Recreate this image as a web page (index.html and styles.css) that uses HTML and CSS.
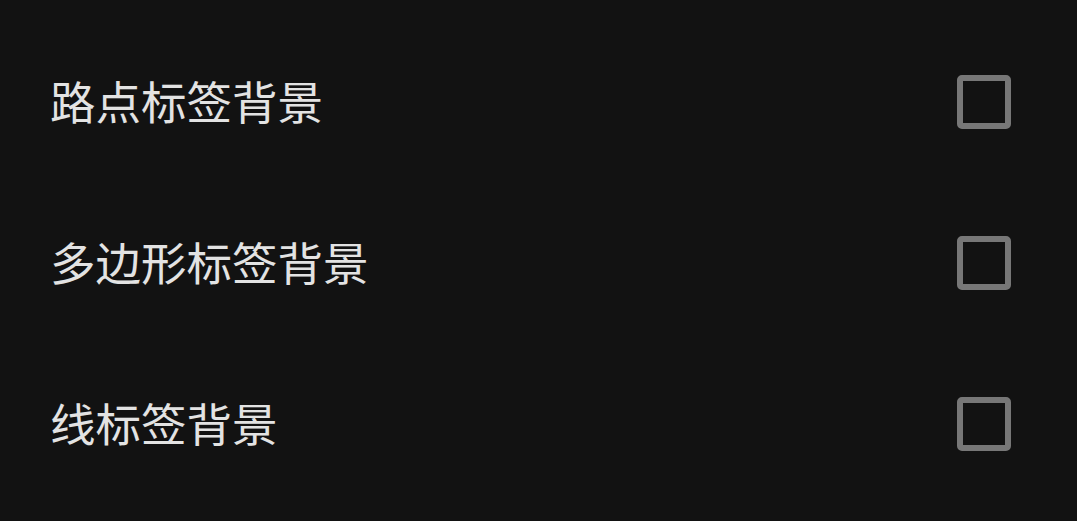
FILE: index.html
```html
<!DOCTYPE html>
<html lang="zh">
<head>
<meta charset="utf-8">
<link rel="stylesheet" href="styles.css">
</head>
<body>
<div class="list">
  <div class="row"><span class="label">路点标签背景</span><span class="box"></span></div>
  <div class="row"><span class="label">多边形标签背景</span><span class="box"></span></div>
  <div class="row"><span class="label">线标签背景</span><span class="box"></span></div>
</div>
</body>
</html>
```
FILE: styles.css
```css
html, body {
  margin: 0;
  padding: 0;
  background: #121212;
}
.list {
  padding: 21px 66px 0 50px;
  display: flex;
  flex-direction: column;
}
.row {
  height: 161px;
  display: flex;
  align-items: center;
  justify-content: space-between;
}
.label {
  font-family: "Noto Sans CJK SC", "Noto Sans", sans-serif;
  font-size: 45.5px;
  color: #e3e3e3;
  line-height: 1;
  position: relative;
  top: -1px;
}
.box {
  width: 42px;
  height: 42px;
  border: 6px solid #777777;
  border-radius: 5px;
}
```
